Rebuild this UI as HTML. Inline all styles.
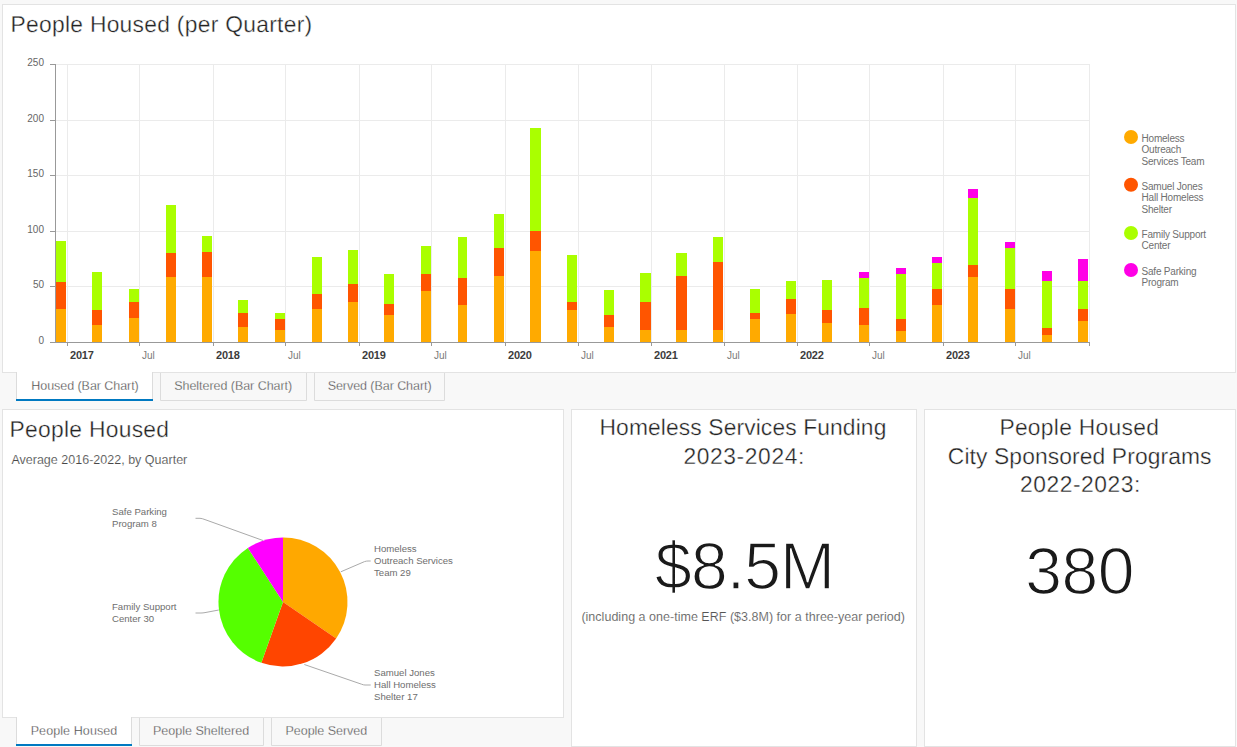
<!DOCTYPE html>
<html><head><meta charset="utf-8">
<style>
html,body{margin:0;padding:0;background:#f8f8f8;width:1237px;height:747px;overflow:hidden}
svg{display:block;font-family:"Liberation Sans",sans-serif}
.t{fill:#222;font-size:22.8px;stroke:#fff;stroke-width:0.35px;text-rendering:geometricPrecision}
.yl text{font-size:10px;fill:#666}
.yl .yr{font-size:11px;font-weight:bold;fill:#3c3c3c;letter-spacing:-0.2px}
.yl .mo{font-size:10px;fill:#7a7a7a}
.tab{font-size:12.5px;fill:#444;stroke:#f8f8f8;stroke-width:0.3px}
.lg{font-size:10px;fill:#707070;letter-spacing:-0.2px}
.pl{font-size:9.6px;fill:#6e6e6e}
</style></head><body>
<svg width="1237" height="747" viewBox="0 0 1237 747">
<rect x="0" y="0" width="1237" height="747" fill="#f8f8f8"/>
<!-- top panel -->
<rect x="2.5" y="4.5" width="1233" height="368" fill="#fff" stroke="#e3e3e3"/>
<!-- top tabs -->
<rect x="17" y="372" width="135" height="27" fill="#fff"/>
<path d="M16.5,372 V399 M152.5,372 V399" stroke="#dcdcdc" fill="none"/>
<rect x="16" y="399" width="137" height="2" fill="#0079c1"/>
<path d="M160.5,373 V400.5 H306.5 V373 M314.5,373 V400.5 H444.5 V373" stroke="#dcdcdc" fill="#f8f8f8"/>
<text class="tab" x="31.3" y="390" style="fill:#3a3a3a;stroke:#fff;letter-spacing:-0.053px">Housed (Bar Chart)</text>
<text class="tab" x="174.2" y="390" style="letter-spacing:-0.04px">Sheltered (Bar Chart)</text>
<text class="tab" x="327.7" y="390" style="letter-spacing:-0.059px">Served (Bar Chart)</text>
<!-- bottom panels -->
<rect x="2.5" y="409.5" width="561" height="308" fill="#fff" stroke="#e3e3e3"/>
<rect x="571.5" y="409.5" width="345" height="337" fill="#fff" stroke="#e3e3e3"/>
<rect x="924.5" y="409.5" width="311" height="337" fill="#fff" stroke="#e3e3e3"/>
<!-- bottom tabs -->
<rect x="17" y="717" width="114" height="27" fill="#fff"/>
<path d="M16.5,717 V744 M131.5,717 V744" stroke="#dcdcdc" fill="none"/>
<rect x="16" y="744" width="116" height="2" fill="#0079c1"/>
<path d="M139.5,718 V745.5 H263.5 V718 M271.5,718 V745.5 H381.5 V718" stroke="#dcdcdc" fill="#f8f8f8"/>
<text class="tab" x="30.7" y="734.5" style="fill:#3a3a3a;stroke:#fff;letter-spacing:0.092px">People Housed</text>
<text class="tab" x="152.9" y="734.5" style="letter-spacing:0.02px">People Sheltered</text>
<text class="tab" x="285.5" y="734.5" style="letter-spacing:-0.025px">People Served</text>

<!-- titles -->
<text class="t" x="10.5" y="32" style="letter-spacing:0.296px">People Housed (per Quarter)</text>
<text class="t" x="9.5" y="437" style="letter-spacing:0.3px">People Housed</text>
<text x="11.4" y="464" style="font-size:12.5px;fill:#484848;stroke:#fff;stroke-width:0.15px;letter-spacing:0.011px">Average 2016-2022, by Quarter</text>

<text class="t" x="599.5" y="435.3" style="letter-spacing:0.125px">Homeless Services Funding</text>
<text class="t" x="683.4" y="464.2" style="letter-spacing:0.622px">2023-2024:</text>
<text x="655.1" y="589" style="font-size:66px;fill:#1a1a1a;stroke:#fff;stroke-width:1.4px;letter-spacing:-0.875px">$8.5M</text>
<text x="581.4" y="621.2" style="font-size:12.5px;fill:#555;stroke:#fff;stroke-width:0.15px;letter-spacing:0.021px">(including a one-time ERF ($3.8M) for a three-year period)</text>

<text class="t" x="999.4" y="435.1" style="letter-spacing:0.3px">People Housed</text>
<text class="t" x="947.8" y="463.9" style="letter-spacing:0.123px">City Sponsored Programs</text>
<text class="t" x="1020" y="492" style="letter-spacing:0.556px">2022-2023:</text>
<text x="1025.2" y="594" style="font-size:66px;fill:#1a1a1a;stroke:#fff;stroke-width:1.4px;letter-spacing:-0.45px">380</text>

<!-- chart -->
<g shape-rendering="crispEdges">
<line x1="55" x2="1090" y1="286.5" y2="286.5" stroke="#ebebeb"/>
<line x1="50" x2="55" y1="286.5" y2="286.5" stroke="#999"/>
<line x1="55" x2="1090" y1="231.5" y2="231.5" stroke="#ebebeb"/>
<line x1="50" x2="55" y1="231.5" y2="231.5" stroke="#999"/>
<line x1="55" x2="1090" y1="175.5" y2="175.5" stroke="#ebebeb"/>
<line x1="50" x2="55" y1="175.5" y2="175.5" stroke="#999"/>
<line x1="55" x2="1090" y1="120.5" y2="120.5" stroke="#ebebeb"/>
<line x1="50" x2="55" y1="120.5" y2="120.5" stroke="#999"/>
<line x1="55" x2="1090" y1="64.5" y2="64.5" stroke="#ebebeb"/>
<line x1="50" x2="55" y1="64.5" y2="64.5" stroke="#999"/>
<line x1="67.5" x2="67.5" y1="64" y2="342" stroke="#ebebeb"/>
<line x1="139.5" x2="139.5" y1="64" y2="342" stroke="#ebebeb"/>
<line x1="213.5" x2="213.5" y1="64" y2="342" stroke="#ebebeb"/>
<line x1="285.5" x2="285.5" y1="64" y2="342" stroke="#ebebeb"/>
<line x1="359.5" x2="359.5" y1="64" y2="342" stroke="#ebebeb"/>
<line x1="431.5" x2="431.5" y1="64" y2="342" stroke="#ebebeb"/>
<line x1="505.5" x2="505.5" y1="64" y2="342" stroke="#ebebeb"/>
<line x1="578.5" x2="578.5" y1="64" y2="342" stroke="#ebebeb"/>
<line x1="651.5" x2="651.5" y1="64" y2="342" stroke="#ebebeb"/>
<line x1="724.5" x2="724.5" y1="64" y2="342" stroke="#ebebeb"/>
<line x1="797.5" x2="797.5" y1="64" y2="342" stroke="#ebebeb"/>
<line x1="869.5" x2="869.5" y1="64" y2="342" stroke="#ebebeb"/>
<line x1="943.5" x2="943.5" y1="64" y2="342" stroke="#ebebeb"/>
<line x1="1015.5" x2="1015.5" y1="64" y2="342" stroke="#ebebeb"/>
<line x1="1089.5" x2="1089.5" y1="64" y2="342" stroke="#ebebeb"/>
<rect x="56.24" y="308.79" width="10.12" height="33.21" fill="#ffaa00"/>
<rect x="56.24" y="282.22" width="10.12" height="26.57" fill="#ff5500"/>
<rect x="56.24" y="241.26" width="10.12" height="40.96" fill="#aaff00"/>
<rect x="92.23" y="325.39" width="10.12" height="16.61" fill="#ffaa00"/>
<rect x="92.23" y="309.90" width="10.12" height="15.50" fill="#ff5500"/>
<rect x="92.23" y="272.26" width="10.12" height="37.64" fill="#aaff00"/>
<rect x="128.98" y="317.65" width="9.80" height="24.35" fill="#ffaa00"/>
<rect x="128.98" y="302.15" width="9.80" height="15.50" fill="#ff5500"/>
<rect x="128.98" y="288.86" width="9.80" height="13.28" fill="#aaff00"/>
<rect x="165.76" y="276.69" width="9.80" height="65.31" fill="#ffaa00"/>
<rect x="165.76" y="253.44" width="9.80" height="23.25" fill="#ff5500"/>
<rect x="165.76" y="204.73" width="9.80" height="48.71" fill="#aaff00"/>
<rect x="202.19" y="276.69" width="10.12" height="65.31" fill="#ffaa00"/>
<rect x="202.19" y="252.33" width="10.12" height="24.35" fill="#ff5500"/>
<rect x="202.19" y="235.73" width="10.12" height="16.60" fill="#aaff00"/>
<rect x="238.17" y="326.50" width="10.12" height="15.50" fill="#ffaa00"/>
<rect x="238.17" y="313.22" width="10.12" height="13.28" fill="#ff5500"/>
<rect x="238.17" y="299.93" width="10.12" height="13.28" fill="#aaff00"/>
<rect x="274.92" y="329.82" width="9.80" height="12.18" fill="#ffaa00"/>
<rect x="274.92" y="318.75" width="9.80" height="11.07" fill="#ff5500"/>
<rect x="274.92" y="313.22" width="9.80" height="5.53" fill="#aaff00"/>
<rect x="311.70" y="308.79" width="9.80" height="33.21" fill="#ffaa00"/>
<rect x="311.70" y="294.40" width="9.80" height="14.39" fill="#ff5500"/>
<rect x="311.70" y="256.76" width="9.80" height="37.64" fill="#aaff00"/>
<rect x="348.13" y="302.15" width="10.12" height="39.85" fill="#ffaa00"/>
<rect x="348.13" y="284.44" width="10.12" height="17.71" fill="#ff5500"/>
<rect x="348.13" y="250.12" width="10.12" height="34.32" fill="#aaff00"/>
<rect x="384.12" y="315.43" width="10.12" height="26.57" fill="#ffaa00"/>
<rect x="384.12" y="304.36" width="10.12" height="11.07" fill="#ff5500"/>
<rect x="384.12" y="274.47" width="10.12" height="29.89" fill="#aaff00"/>
<rect x="420.86" y="291.08" width="9.80" height="50.92" fill="#ffaa00"/>
<rect x="420.86" y="274.47" width="9.80" height="16.60" fill="#ff5500"/>
<rect x="420.86" y="245.69" width="9.80" height="28.78" fill="#aaff00"/>
<rect x="457.65" y="305.47" width="9.80" height="36.53" fill="#ffaa00"/>
<rect x="457.65" y="277.79" width="9.80" height="27.68" fill="#ff5500"/>
<rect x="457.65" y="236.84" width="9.80" height="40.96" fill="#aaff00"/>
<rect x="494.07" y="275.58" width="10.12" height="66.42" fill="#ffaa00"/>
<rect x="494.07" y="247.91" width="10.12" height="27.67" fill="#ff5500"/>
<rect x="494.07" y="213.59" width="10.12" height="34.32" fill="#aaff00"/>
<rect x="530.46" y="251.23" width="10.12" height="90.77" fill="#ffaa00"/>
<rect x="530.46" y="231.30" width="10.12" height="19.93" fill="#ff5500"/>
<rect x="530.46" y="128.35" width="10.12" height="102.95" fill="#aaff00"/>
<rect x="567.20" y="309.90" width="9.80" height="32.10" fill="#ffaa00"/>
<rect x="567.20" y="302.15" width="9.80" height="7.75" fill="#ff5500"/>
<rect x="567.20" y="254.55" width="9.80" height="47.60" fill="#aaff00"/>
<rect x="603.99" y="326.50" width="9.80" height="15.50" fill="#ffaa00"/>
<rect x="603.99" y="315.43" width="9.80" height="11.07" fill="#ff5500"/>
<rect x="603.99" y="289.97" width="9.80" height="25.46" fill="#aaff00"/>
<rect x="640.42" y="329.82" width="10.12" height="12.18" fill="#ffaa00"/>
<rect x="640.42" y="302.15" width="10.12" height="27.67" fill="#ff5500"/>
<rect x="640.42" y="273.37" width="10.12" height="28.78" fill="#aaff00"/>
<rect x="676.40" y="329.82" width="10.12" height="12.18" fill="#ffaa00"/>
<rect x="676.40" y="275.58" width="10.12" height="54.24" fill="#ff5500"/>
<rect x="676.40" y="253.44" width="10.12" height="22.14" fill="#aaff00"/>
<rect x="713.15" y="329.82" width="9.80" height="12.18" fill="#ffaa00"/>
<rect x="713.15" y="262.30" width="9.80" height="67.53" fill="#ff5500"/>
<rect x="713.15" y="236.84" width="9.80" height="25.46" fill="#aaff00"/>
<rect x="749.93" y="318.75" width="9.80" height="23.25" fill="#ffaa00"/>
<rect x="749.93" y="313.22" width="9.80" height="5.53" fill="#ff5500"/>
<rect x="749.93" y="288.86" width="9.80" height="24.35" fill="#aaff00"/>
<rect x="786.36" y="314.32" width="10.12" height="27.68" fill="#ffaa00"/>
<rect x="786.36" y="298.83" width="10.12" height="15.50" fill="#ff5500"/>
<rect x="786.36" y="281.12" width="10.12" height="17.71" fill="#aaff00"/>
<rect x="822.34" y="323.18" width="10.12" height="18.82" fill="#ffaa00"/>
<rect x="822.34" y="309.90" width="10.12" height="13.28" fill="#ff5500"/>
<rect x="822.34" y="280.01" width="10.12" height="29.89" fill="#aaff00"/>
<rect x="859.09" y="325.39" width="9.80" height="16.61" fill="#ffaa00"/>
<rect x="859.09" y="307.68" width="9.80" height="17.71" fill="#ff5500"/>
<rect x="859.09" y="277.79" width="9.80" height="29.89" fill="#aaff00"/>
<rect x="859.09" y="272.26" width="9.80" height="5.53" fill="#ff00e6"/>
<rect x="895.88" y="330.93" width="9.80" height="11.07" fill="#ffaa00"/>
<rect x="895.88" y="318.75" width="9.80" height="12.18" fill="#ff5500"/>
<rect x="895.88" y="274.47" width="9.80" height="44.28" fill="#aaff00"/>
<rect x="895.88" y="267.83" width="9.80" height="6.64" fill="#ff00e6"/>
<rect x="932.30" y="305.47" width="10.12" height="36.53" fill="#ffaa00"/>
<rect x="932.30" y="288.86" width="10.12" height="16.60" fill="#ff5500"/>
<rect x="932.30" y="263.40" width="10.12" height="25.46" fill="#aaff00"/>
<rect x="932.30" y="256.76" width="10.12" height="6.64" fill="#ff00e6"/>
<rect x="968.29" y="276.69" width="10.12" height="65.31" fill="#ffaa00"/>
<rect x="968.29" y="264.51" width="10.12" height="12.18" fill="#ff5500"/>
<rect x="968.29" y="198.09" width="10.12" height="66.42" fill="#aaff00"/>
<rect x="968.29" y="189.23" width="10.12" height="8.86" fill="#ff00e6"/>
<rect x="1005.03" y="308.79" width="9.80" height="33.21" fill="#ffaa00"/>
<rect x="1005.03" y="288.86" width="9.80" height="19.93" fill="#ff5500"/>
<rect x="1005.03" y="247.91" width="9.80" height="40.96" fill="#aaff00"/>
<rect x="1005.03" y="242.37" width="9.80" height="5.53" fill="#ff00e6"/>
<rect x="1041.82" y="335.36" width="9.80" height="6.64" fill="#ffaa00"/>
<rect x="1041.82" y="327.61" width="9.80" height="7.75" fill="#ff5500"/>
<rect x="1041.82" y="281.12" width="9.80" height="46.49" fill="#aaff00"/>
<rect x="1041.82" y="271.15" width="9.80" height="9.96" fill="#ff00e6"/>
<rect x="1078.24" y="320.97" width="10.12" height="21.03" fill="#ffaa00"/>
<rect x="1078.24" y="308.79" width="10.12" height="12.18" fill="#ff5500"/>
<rect x="1078.24" y="281.12" width="10.12" height="27.68" fill="#aaff00"/>
<rect x="1078.24" y="258.98" width="10.12" height="22.14" fill="#ff00e6"/>
<line x1="55.5" x2="55.5" y1="64" y2="342" stroke="#999"/>
<line x1="50" x2="1090" y1="342.5" y2="342.5" stroke="#999"/>
<line x1="67.5" x2="67.5" y1="343" y2="346" stroke="#999"/>
<line x1="139.5" x2="139.5" y1="343" y2="346" stroke="#999"/>
<line x1="213.5" x2="213.5" y1="343" y2="346" stroke="#999"/>
<line x1="285.5" x2="285.5" y1="343" y2="346" stroke="#999"/>
<line x1="359.5" x2="359.5" y1="343" y2="346" stroke="#999"/>
<line x1="431.5" x2="431.5" y1="343" y2="346" stroke="#999"/>
<line x1="505.5" x2="505.5" y1="343" y2="346" stroke="#999"/>
<line x1="578.5" x2="578.5" y1="343" y2="346" stroke="#999"/>
<line x1="651.5" x2="651.5" y1="343" y2="346" stroke="#999"/>
<line x1="724.5" x2="724.5" y1="343" y2="346" stroke="#999"/>
<line x1="797.5" x2="797.5" y1="343" y2="346" stroke="#999"/>
<line x1="869.5" x2="869.5" y1="343" y2="346" stroke="#999"/>
<line x1="943.5" x2="943.5" y1="343" y2="346" stroke="#999"/>
<line x1="1015.5" x2="1015.5" y1="343" y2="346" stroke="#999"/>
<line x1="1089.5" x2="1089.5" y1="343" y2="346" stroke="#999"/>
</g>
<g class="yl">
<text x="44" y="343.5" text-anchor="end">0</text>
<text x="44" y="287.5" text-anchor="end">50</text>
<text x="44" y="232.5" text-anchor="end">100</text>
<text x="44" y="176.5" text-anchor="end">150</text>
<text x="44" y="121.5" text-anchor="end">200</text>
<text x="44" y="65.5" text-anchor="end">250</text>
<text x="70.0" y="359" class="yr">2017</text>
<text x="142.0" y="359" class="mo">Jul</text>
<text x="216.0" y="359" class="yr">2018</text>
<text x="288.0" y="359" class="mo">Jul</text>
<text x="362.0" y="359" class="yr">2019</text>
<text x="434.0" y="359" class="mo">Jul</text>
<text x="508.0" y="359" class="yr">2020</text>
<text x="581.0" y="359" class="mo">Jul</text>
<text x="654.0" y="359" class="yr">2021</text>
<text x="727.0" y="359" class="mo">Jul</text>
<text x="800.0" y="359" class="yr">2022</text>
<text x="872.0" y="359" class="mo">Jul</text>
<text x="946.0" y="359" class="yr">2023</text>
<text x="1018.0" y="359" class="mo">Jul</text>
</g>
<!-- legend -->
<circle cx="1131" cy="137" r="7" fill="#ffaa00"/>
<circle cx="1131" cy="184.8" r="7" fill="#ff5500"/>
<circle cx="1131" cy="233" r="7" fill="#aaff00"/>
<circle cx="1131" cy="270" r="7" fill="#ff00e6"/>
<g class="lg">
<text x="1141.5" y="141.7">Homeless</text>
<text x="1141.5" y="153">Outreach</text>
<text x="1141.5" y="164.6">Services Team</text>
<text x="1141.5" y="189.9">Samuel Jones</text>
<text x="1141.5" y="201.2">Hall Homeless</text>
<text x="1141.5" y="212.5">Shelter</text>
<text x="1141.5" y="238">Family Support</text>
<text x="1141.5" y="249.4">Center</text>
<text x="1141.5" y="274.7">Safe Parking</text>
<text x="1141.5" y="286.3">Program</text>
</g>
<!-- pie -->
<path d="M283,602 L283.00,537.50 A64.5,64.5 0 0 1 336.16,638.53 Z" fill="#ffa800"/>
<path d="M283,602 L336.16,638.53 A64.5,64.5 0 0 1 261.36,662.76 Z" fill="#ff4500"/>
<path d="M283,602 L261.36,662.76 A64.5,64.5 0 0 1 247.87,547.91 Z" fill="#55ff00"/>
<path d="M283,602 L247.87,547.91 A64.5,64.5 0 0 1 283.00,537.50 Z" fill="#ff00ff"/>
<g fill="none" stroke="#aaa" stroke-width="1">
<path d="M195.5,518.3 L200,518.3 Q202,518.4 205,519.6 L263,540.5"/>
<path d="M340.8,571.8 L364.5,561.6 Q366.5,561 368,561 L370.7,561"/>
<path d="M195.5,613 L201,613 Q203,613 205,612.6 L218.8,610"/>
<path d="M304.3,664.5 L361.5,684.2 Q363.5,685 365,685 L370.7,685"/>
</g>
<g class="pl">
<text x="112" y="515.3">Safe Parking</text>
<text x="112" y="527.3">Program 8</text>
<text x="112" y="609.9">Family Support</text>
<text x="112" y="621.8">Center 30</text>
<text x="374" y="551.8">Homeless</text>
<text x="374" y="563.8">Outreach Services</text>
<text x="374" y="576">Team 29</text>
<text x="374" y="676">Samuel Jones</text>
<text x="374" y="688.2">Hall Homeless</text>
<text x="374" y="700.2">Shelter 17</text>
</g>
</svg>
</body></html>
